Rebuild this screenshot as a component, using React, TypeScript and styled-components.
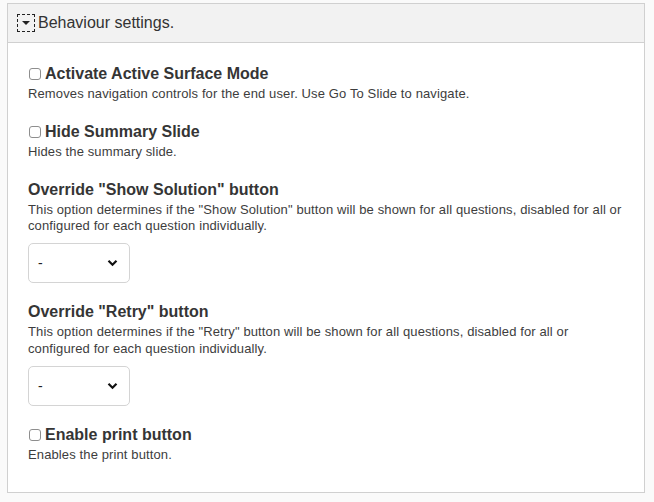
import React from "react";
import styled, { createGlobalStyle } from "styled-components";

const Global = createGlobalStyle`
  html, body { margin: 0; padding: 0; background: #fafafa; }
  body { font-family: "Liberation Sans", Arial, sans-serif; color: #333; }
`;

const Page = styled.div`
  padding: 3px 9px 9px 7px;
`;

const Fieldset = styled.section`
  border: 1px solid #d0d0d0;
  background: #fff;
`;

const Header = styled.div`
  display: flex;
  align-items: center;
  gap: 3px;
  height: 38px;
  padding-left: 9px;
  background: #f2f2f2;
  border-bottom: 1px solid #d0d0d0;
  font-size: 16px;
  color: #333;
`;

const Toggle = styled.span`
  display: inline-flex;
  align-items: center;
  justify-content: center;
  width: 18px;
  height: 18px;
  border: 1px dashed #222;
  box-sizing: border-box;
`;

const Triangle = styled.span`
  width: 0;
  height: 0;
  border-left: 4px solid transparent;
  border-right: 4px solid transparent;
  border-top: 4px solid #222;
`;

const Content = styled.div`
  display: flex;
  flex-direction: column;
  gap: 18px;
  padding: 20px 20px 28px 20px;
`;

const Field = styled.div`
  display: flex;
  flex-direction: column;
`;

const Label = styled.label`
  display: flex;
  align-items: center;
  gap: 4px;
  font-size: 16px;
  font-weight: bold;
  line-height: 20px;
  color: #353535;
  padding-top: 1px;
`;

const Check = styled.span`
  width: 12px;
  height: 12px;
  box-sizing: border-box;
  border: 1px solid #8e8e8e;
  border-radius: 3px;
  background: #fff;
  margin-left: 1px;
`;

const Desc = styled.div`
  margin-top: 2px;
  font-size: 13px;
  letter-spacing: 0.12px;
  line-height: 16.8px;
  color: #3d3d3d;
`;

const Select = styled.div`
  margin-top: 8px;
  width: 102px;
  height: 40px;
  box-sizing: border-box;
  border: 1px solid #d4d4d4;
  border-radius: 5px;
  background: #fff;
  display: flex;
  align-items: center;
  justify-content: space-between;
  padding: 0 11px 0 9px;
  font-size: 14px;
  color: #222;
`;

const Chevron = () => (
  <svg width="11" height="8" viewBox="0 0 11 8">
    <path d="M1.5 1.8 L5.5 5.8 L9.5 1.8" fill="none" stroke="#111" strokeWidth="2.2" />
  </svg>
);

type FieldProps = {
  label: string;
  desc: React.ReactNode;
  checkbox?: boolean;
  select?: boolean;
};

const FormField = ({ label, desc, checkbox, select }: FieldProps) => (
  <Field>
    <Label>
      {checkbox && <Check />}
      {label}
    </Label>
    <Desc>{desc}</Desc>
    {select && (
      <Select>
        <span>-</span>
        <Chevron />
      </Select>
    )}
  </Field>
);

export default function App() {
  return (
    <>
      <Global />
      <Page>
        <Fieldset>
          <Header>
            <Toggle>
              <Triangle />
            </Toggle>
            <span>Behaviour settings.</span>
          </Header>
          <Content>
            <FormField
              checkbox
              label="Activate Active Surface Mode"
              desc="Removes navigation controls for the end user. Use Go To Slide to navigate."
            />
            <FormField checkbox label="Hide Summary Slide" desc="Hides the summary slide." />
            <FormField
              select
              label={'Override "Show Solution" button'}
              desc={
                <>
                  This option determines if the "Show Solution" button will be shown for all questions, disabled for all or
                  <br />
                  configured for each question individually.
                </>
              }
            />
            <FormField
              select
              label={'Override "Retry" button'}
              desc={
                <>
                  This option determines if the "Retry" button will be shown for all questions, disabled for all or
                  <br />
                  configured for each question individually.
                </>
              }
            />
            <FormField checkbox label="Enable print button" desc="Enables the print button." />
          </Content>
        </Fieldset>
      </Page>
    </>
  );
}
